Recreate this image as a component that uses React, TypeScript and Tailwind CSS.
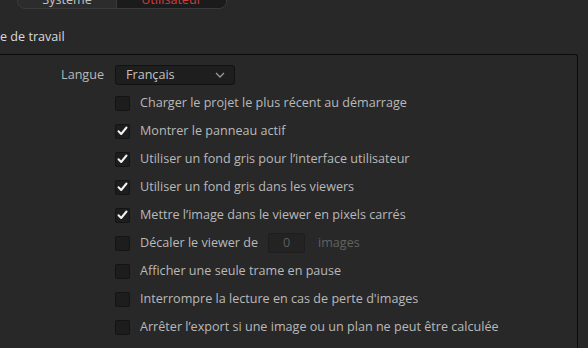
import React from 'react';

const rows: { label: string; checked: boolean }[] = [
  { label: 'Charger le projet le plus récent au démarrage', checked: false },
  { label: 'Montrer le panneau actif', checked: true },
  { label: 'Utiliser un fond gris pour l’interface utilisateur', checked: true },
  { label: 'Utiliser un fond gris dans les viewers', checked: true },
  { label: 'Mettre l’image dans le viewer en pixels carrés', checked: true },
];

const rowsAfter = [
  'Afficher une seule trame en pause',
  "Interrompre la lecture en cas de perte d'images",
  'Arrêter l’export si une image ou un plan ne peut être calculée',
];

function Checkbox({ checked }: { checked: boolean }) {
  return (
    <span className="flex h-[15px] w-[15px] shrink-0 items-center justify-center rounded-[2px] border border-[#141414] bg-[#1d1d1d]">
      {checked && (
        <svg width="11" height="10" viewBox="0 0 11 10" fill="none">
          <path d="M1.5 5.2 L4.2 8 L9.5 1.5" stroke="#f2f2f2" strokeWidth="2" strokeLinecap="round" strokeLinejoin="round" />
        </svg>
      )}
    </span>
  );
}

function Row({ children }: { children: React.ReactNode }) {
  return <div className="flex h-[28px] items-center gap-[10px] pl-[115px]">{children}</div>;
}

export default function App() {
  return (
    <div
      className="h-[348px] w-[588px] overflow-hidden bg-[#282828] text-[12.6px] text-[#b9b9b9]"
      style={{ fontFamily: '"Open Sans", "Noto Sans", sans-serif' }}
    >
      <div className="-mt-[13px] ml-[17px] flex h-[22px] w-[210px] overflow-hidden rounded-b-[8px] border border-[#3a3a3a] bg-[#2c2c2c] pt-[4px]">
        <div className="flex w-[99px] items-center justify-center border-r border-[#3a3a3a] text-[#c4c4c4]">Système</div>
        <div className="-mt-[4px] flex flex-1 items-center justify-center bg-[#1b1b1b] pt-[4px] text-[#d23c3c]">Utilisateur</div>
      </div>

      <div className="flex h-[45px] items-center pt-[12px] text-[12.6px] text-[#dadada]">e de travail</div>

      <div className="mr-[10px] h-[400px] rounded-tr-[3px] border-t border-r border-[#0b0b0b] pt-[6px]">
        <div className="flex h-[28px] items-center gap-[11px]">
          <span className="w-[104px] text-right">Langue</span>
          <div className="flex h-[20px] w-[120px] items-center justify-between rounded-[3px] border border-[#121212] bg-[#1e1e1e] pl-[10px] pr-[9px]">
            <span className="text-[#c2c2c2]">Français</span>
            <svg width="10" height="6" viewBox="0 0 10 6" fill="none">
              <path d="M1 1 L5 5 L9 1" stroke="#9a9a9a" strokeWidth="1.3" />
            </svg>
          </div>
        </div>

        {rows.map((r) => (
          <Row key={r.label}>
            <Checkbox checked={r.checked} />
            <span>{r.label}</span>
          </Row>
        ))}

        <Row>
          <Checkbox checked={false} />
          <span>Décaler le viewer de</span>
          <span className="flex h-[20px] w-[37px] items-center justify-center rounded-[2px] border border-[#1e1e1e] bg-[#232323] text-[#5c5c5c]">
            0
          </span>
          <span className="ml-[3px] text-[#626262]">images</span>
        </Row>

        {rowsAfter.map((l) => (
          <Row key={l}>
            <Checkbox checked={false} />
            <span>{l}</span>
          </Row>
        ))}

        <div className="flex h-[28px] items-center pl-[115px]">
          <div className="mt-[8px] h-[20px] w-[120px] rounded-[3px] border border-[#121212] bg-[#1e1e1e]" />
        </div>
      </div>
    </div>
  );
}
